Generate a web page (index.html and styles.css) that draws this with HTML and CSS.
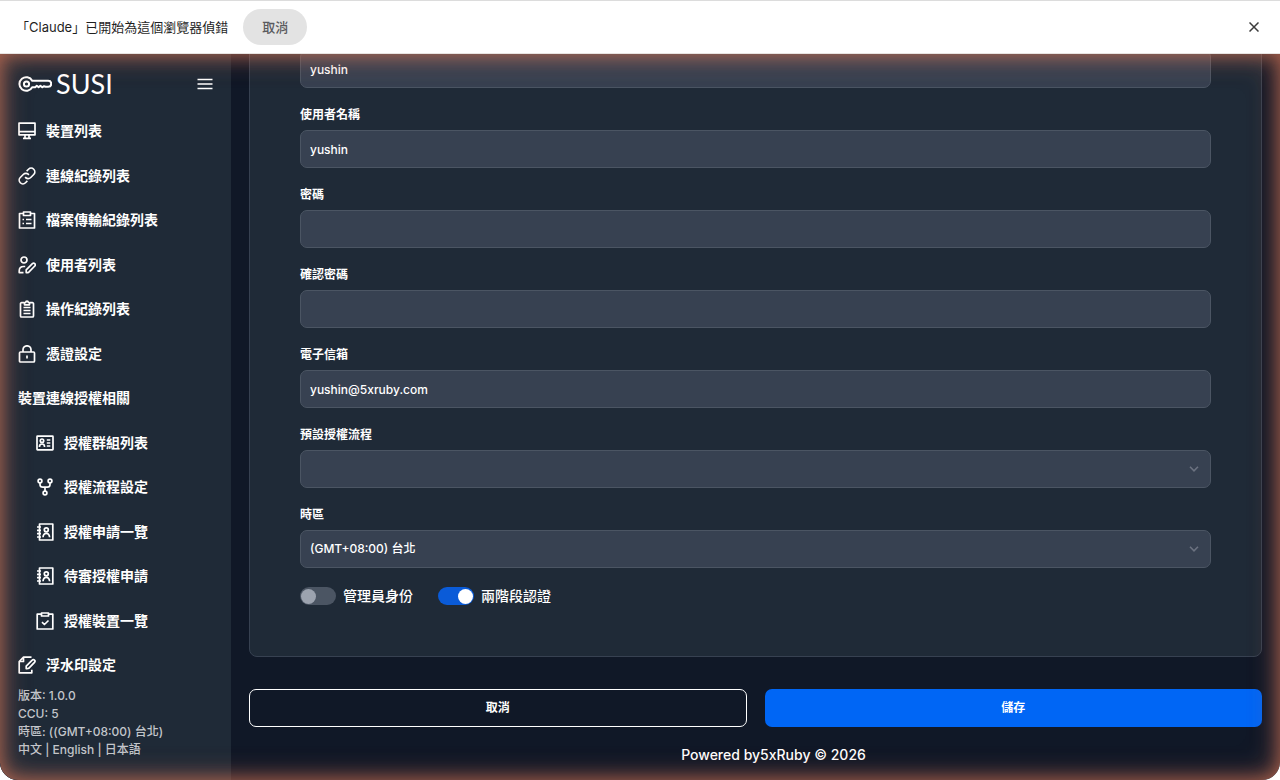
FILE: index.html
```html
<!DOCTYPE html>
<html lang="zh-Hant">
<head>
<meta charset="utf-8">
<meta name="viewport" content="width=device-width, initial-scale=1">
<title>SUSI</title>
<link rel="stylesheet" href="styles.css">
</head>
<body>

<div class="infobar">
  <span>「Claude」已開始為這個瀏覽器偵錯</span>
  <button type="button" class="infobar-cancel">取消</button>
  <button type="button" class="infobar-close" aria-label="關閉">
    <svg width="10" height="10" viewBox="0 0 10 10"><path d="M.5.5l9 9M9.5.5l-9 9"/></svg>
  </button>
</div>

<div class="app">
  <aside class="sidebar">
    <div class="brand">
      <a href="#" class="logo">
        <svg width="34" height="18" viewBox="0 0 34 18">
          <path d="M14.200 5.800A6.800 6.800 0 1 0 14.200 12.200H17.200L18.800 10.800L20.600 12.300L22.400 10.800L24.200 12.300L26 11.200L27.500 11.800H30.200A2.900 2.900 0 0 0 30.200 5.800Z"/>
          <circle cx="8.500" cy="9" r="2.600"/>
        </svg>
        <span>SUSI</span>
      </a>
      <button type="button" class="menu-btn" aria-label="選單">
        <svg width="16" height="12" viewBox="0 0 16 12"><path d="M.5 1.5h15M.5 6h15M.5 10.500h15"/></svg>
      </button>
    </div>

    <nav class="nav">
      <a href="#"><svg viewBox="0 0 18 18"><path d="M1 1.200h16v11.600H1zM1 9.600h16M7 13v3.200M11 13v3.200M5 16.400h8"/></svg>裝置列表</a>
      <a href="#"><svg class="wide" viewBox="0 0 24 24"><path d="M9.500 13.500a5 5 0 0 0 7.500.5l4-4a4.950 4.950 0 0 0-7-7l-2.500 2.500M14.500 10.500a5 5 0 0 0-7.500-.5l-4 4a4.950 4.950 0 0 0 7 7l2.500-2.500"/></svg>連線紀錄列表</a>
      <a href="#"><svg viewBox="0 0 18 18"><path d="M5.500 2.500H1.500v14.500h15V2.500h-4M5.500 1h7v3.500h-7zM4.500 8.500h1.500M8 8.500h5.500M4.500 12.500h1.500M8 12.500h5.500"/></svg>檔案傳輸紀錄列表</a>
      <a href="#"><svg viewBox="0 0 18 18"><circle cx="6" cy="4" r="3"/><path d="M5.500 16.600H1.200v-1.600c0-2.800 1.800-4.500 4.500-4.500h1.500M8.200 16.600v-2.800l6.200-6.200a1.700 1.700 0 0 1 2.400 2.400l-6 6.200c-.6.400-1.800.4-2.600.4z"/></svg>使用者列表</a>
      <a href="#"><svg viewBox="0 0 18 18"><path d="M6 2.700H3.500a1 1 0 0 0-1 1V16a1 1 0 0 0 1 1h11a1 1 0 0 0 1-1V3.700a1 1 0 0 0-1-1H12M6.500 4.800V2.500h1.200a1.300 1.300 0 0 1 2.600 0h1.200v2.300zM5.500 7.500h7M5.500 10.500h7M5.500 13.500h7"/></svg>操作紀錄列表</a>
      <a href="#"><svg viewBox="0 0 18 18"><rect x="1.500" y="7" width="15" height="10" rx="1"/><path d="M5 7V4.800a4 4 0 0 1 8 0V7M9 10.500v3"/></svg>憑證設定</a>
      <span class="nav-title">裝置連線授權相關</span>
      <a href="#" class="sub"><svg viewBox="0 0 18 18"><rect x="1" y="2.200" width="16" height="13.600" rx=".5"/><circle cx="6" cy="6.700" r="1.700"/><path d="M3.500 13v-.5a2.500 2.500 0 0 1 5 0v.5M10.800 6h3.500M10.800 9h3.500M10.800 12h3.500"/></svg>授權群組列表</a>
      <a href="#" class="sub"><svg viewBox="0 0 18 18"><circle cx="4" cy="3" r="1.900"/><circle cx="14" cy="3" r="1.900"/><circle cx="9" cy="15" r="1.900"/><path d="M4 5v1.500c0 2 1.200 2.700 2.800 2.700h4.400c1.600 0 2.800-.7 2.800-2.700V5M9 9.200V13"/></svg>授權流程設定</a>
      <a href="#" class="sub"><svg viewBox="0 0 18 18"><path d="M3.500 1h13.300v16H3.500zM1 4h4M1 7.300h4M1 10.700h4M1 14h4"/><circle cx="10.300" cy="6.800" r="2"/><path d="M7 14.200c.2-2.400 1.300-3.900 3.300-3.900s3.100 1.500 3.300 3.900"/></svg>授權申請一覽</a>
      <a href="#" class="sub"><svg viewBox="0 0 18 18"><path d="M3.500 1h13.300v16H3.500zM1 4h4M1 7.300h4M1 10.700h4M1 14h4"/><circle cx="10.300" cy="6.800" r="2"/><path d="M7 14.200c.2-2.400 1.300-3.900 3.300-3.900s3.100 1.500 3.300 3.900"/></svg>待審授權申請</a>
      <a href="#" class="sub"><svg viewBox="0 0 18 18"><path d="M5.500 2.200H1.200V17h15.600V2.200h-4.300M5.500 1h7v3h-7zM6 10.200l2.400 2.300L12.500 8.500"/></svg>授權裝置一覽</a>
      <a href="#"><svg viewBox="0 0 18 18"><path d="M13.500 1.200H5.500L1.200 5.500V16.800h12.600v-3M5.500 1.500V5.500H1.500M8.200 12.600v-2.500l6-6a1.500 1.500 0 0 1 2.300 2.200l-5.800 6c-.6.400-1.500.3-2.500.3z"/></svg>浮水印設定</a>
    </nav>

    <div class="info">
      <div>版本: 1.0.0</div>
      <div>CCU: 5</div>
      <div>時區: ((GMT+08:00) 台北)</div>
      <div><a href="#">中文</a> | <a href="#">English</a> | <a href="#">日本語</a></div>
    </div>
  </aside>

  <main class="main">
    <form class="form" id="userForm">
      <div class="card">
        <div class="field">
          <input type="text" value="yushin" aria-label="帳號">
        </div>
        <div class="field">
          <label for="username">使用者名稱</label>
          <input type="text" id="username" value="yushin">
        </div>
        <div class="field">
          <label for="password">密碼</label>
          <input type="password" id="password">
        </div>
        <div class="field">
          <label for="confirm">確認密碼</label>
          <input type="password" id="confirm">
        </div>
        <div class="field">
          <label for="email">電子信箱</label>
          <input type="email" id="email" value="yushin@5xruby.com">
        </div>
        <div class="field">
          <label for="flow">預設授權流程</label>
          <select id="flow"><option></option></select>
        </div>
        <div class="field">
          <label for="timezone">時區</label>
          <select id="timezone"><option>(GMT+08:00) 台北</option></select>
        </div>
        <div class="switches">
          <label><input type="checkbox" class="switch">管理員身份</label>
          <label><input type="checkbox" class="switch" checked>兩階段認證</label>
        </div>
      </div>
      <div class="actions">
        <button type="button" class="btn btn-outline">取消</button>
        <button type="submit" class="btn btn-primary">儲存</button>
      </div>
    </form>
    <footer class="footer">Powered by5xRuby © 2026</footer>
  </main>
</div>

</body>
</html>
```
FILE: styles.css
```css
* {
  box-sizing: border-box;
}

body {
  margin: 0;
  height: 100vh;
  display: flex;
  flex-direction: column;
  background: #fff;
  color: #fff;
  font-family: Inter, "Noto Sans CJK TC", sans-serif;
  font-size: 14px;
  line-height: 20px;
}

button, input, select {
  font: inherit;
  color: inherit;
}

button {
  cursor: pointer;
}

a {
  color: inherit;
  text-decoration: none;
}

svg {
  fill: none;
  stroke: currentColor;
  flex: none;
}

/* browser notice */
.infobar {
  flex: none;
  display: flex;
  align-items: center;
  gap: 15px;
  height: 54px;
  padding: 0 16px;
  border-top: 1px solid #dcdcdc;
  border-bottom: 1px solid #e8e4e2;
  color: #1f1f1f;
  font-size: 13px;
}

.infobar-cancel {
  width: 64px;
  height: 36px;
  padding: 0;
  border: none;
  border-radius: 18px;
  background: #e3e3e3;
  color: #5a5a5e;
  font-weight: 500;
}

.infobar-close {
  display: flex;
  margin-left: auto;
  padding: 5px;
  border: none;
  background: none;
  color: #3c3c3c;
}

.infobar-close svg {
  stroke-width: 1.5;
}

/* layout */
.app {
  position: relative;
  flex: 1;
  min-height: 0;
  display: flex;
  overflow: hidden;
  background: #101827;
  border-radius: 0 0 18px 18px;
}

/* glow along the window edges */
.app::after {
  content: "";
  position: absolute;
  inset: 0;
  border-radius: 0 0 18px 18px;
  box-shadow: inset 0 0 18px rgba(217, 119, 87, 0.6), inset 0 0 28px rgba(217, 119, 87, 0.4), inset 0 0 36px rgba(217, 119, 87, 0.15);
  pointer-events: none;
}

.sidebar {
  flex: none;
  display: flex;
  flex-direction: column;
  width: 231px;
  padding: 18px 18px 21px;
  background: #1f2a37;
}

.brand {
  display: flex;
  align-items: center;
  justify-content: space-between;
  height: 24px;
}

.logo {
  display: flex;
  align-items: center;
  gap: 4px;
  font-family: Lato, sans-serif;
  font-size: 27px;
  line-height: 24px;
}

.logo svg {
  stroke-width: 2;
  stroke-linejoin: round;
}

.menu-btn {
  display: flex;
  padding: 0;
  border: none;
  background: none;
}

.menu-btn svg {
  stroke-width: 1.3;
}

.nav {
  flex: 1;
  display: flex;
  flex-direction: column;
  justify-content: space-between;
  padding: 25px 0 12px;
  font-weight: 700;
}

.nav a {
  display: flex;
  align-items: center;
  gap: 10px;
}

.nav .sub {
  padding-left: 18px;
}

.nav svg {
  width: 18px;
  height: 18px;
  stroke-width: 1.7;
  stroke-linejoin: round;
}

.nav .wide {
  stroke-width: 2.2;
}

.info {
  color: #c3c6cb;
  font-size: 12px;
  font-weight: 500;
  line-height: 18px;
}

/* the form stays scrolled to its end */
.main {
  flex: 1;
  min-width: 0;
  display: flex;
  flex-direction: column;
  justify-content: flex-end;
  padding: 0 18px 15px;
}

.card {
  padding: 50px;
  background: #1f2a37;
  border: 1px solid #374151;
  border-radius: 8px;
}

.field {
  margin-bottom: 18px;
  font-size: 12px;
}

.field label {
  display: block;
  margin-bottom: 6px;
  line-height: 18px;
  font-weight: 700;
}

.field input, .field select {
  display: block;
  width: 100%;
  height: 38px;
  padding: 0 9px;
  background: #374151;
  border: 1px solid #4b5563;
  border-radius: 7px;
  font-size: 12px;
  font-weight: 500;
}

.field select {
  appearance: none;
  background-image: url("data:image/svg+xml,%3Csvg xmlns='http://www.w3.org/2000/svg' width='10' height='6' viewBox='0 0 10 6' fill='none' stroke='%236b7280' stroke-width='1.6'%3E%3Cpath d='M1 .8l4 4 4-4'/%3E%3C/svg%3E");
  background-repeat: no-repeat;
  background-position: right 11px center;
}

.switches {
  display: flex;
  gap: 25px;
  font-weight: 500;
}

.switches label {
  display: flex;
  align-items: center;
  gap: 7px;
}

.switch {
  appearance: none;
  display: flex;
  align-items: center;
  width: 36px;
  height: 18px;
  margin: 0;
  padding: 0 1px;
  border-radius: 9px;
  background: #4b5563;
}

.switch::before {
  content: "";
  width: 15px;
  height: 15px;
  border-radius: 50%;
  background: #9ca3af;
}

.switch:checked {
  justify-content: flex-end;
  background: #0a5bd8;
}

.switch:checked::before {
  background: #fff;
}

.actions {
  display: grid;
  grid-template-columns: 1fr 1fr;
  gap: 18px;
  margin-top: 32px;
}

.btn {
  height: 38px;
  border-radius: 7px;
  font-size: 12px;
  font-weight: 700;
}

.btn-outline {
  border: 1px solid #fff;
  background: transparent;
}

.btn-primary {
  border: none;
  background: #0066f5;
}

.footer {
  margin-top: 18px;
  padding-left: 36px;
  text-align: center;
  font-weight: 500;
}
```
